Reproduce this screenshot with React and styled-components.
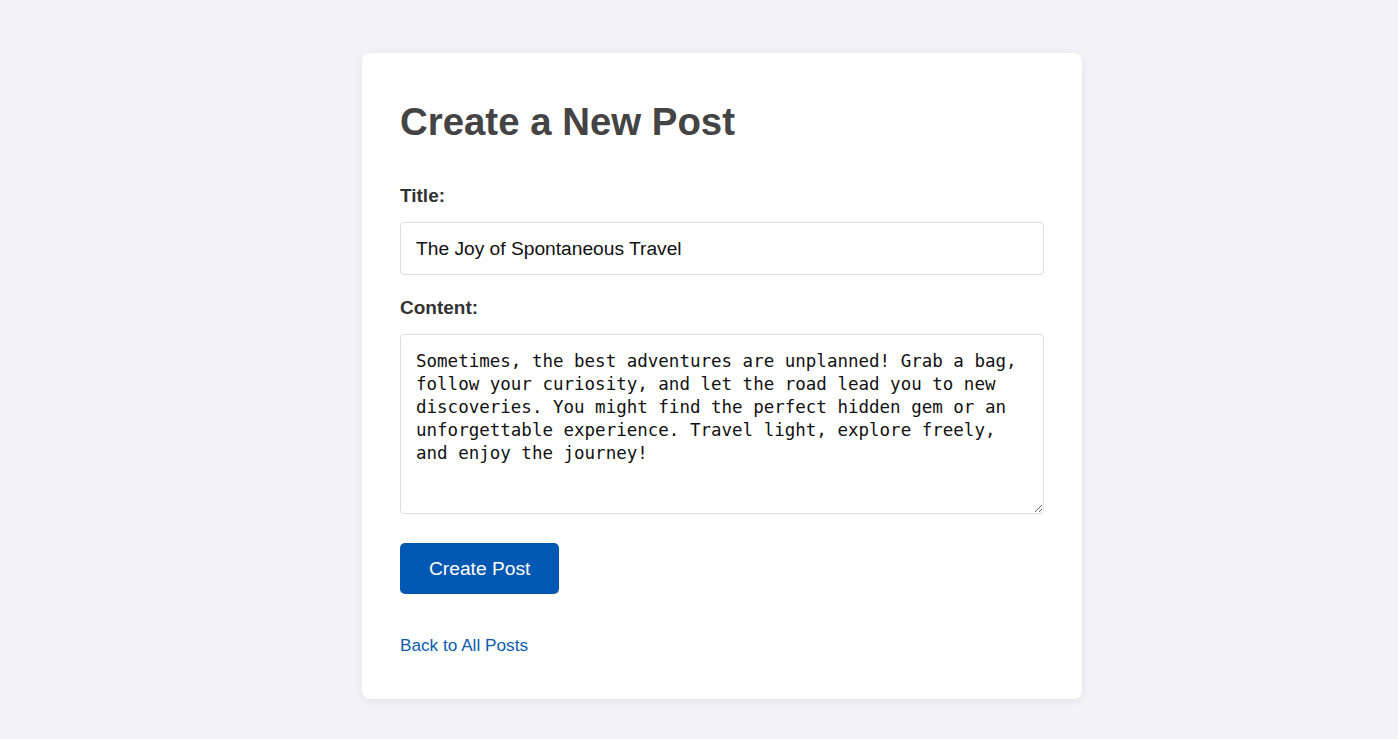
import React from "react";
import styled, { createGlobalStyle } from "styled-components";

const GlobalStyle = createGlobalStyle`
  body {
    margin: 0;
    background: #f3f3f7;
    font-family: "Liberation Sans", Arial, sans-serif;
  }
`;

const CreatePost = () => {
  return (
    <Page>
      <GlobalStyle />
      <Card>
        <Heading>Create a New Post</Heading>
        <form onSubmit={(e) => e.preventDefault()}>
          <Field>
            <Label htmlFor="title">Title:</Label>
            <TextInput
              id="title"
              type="text"
              defaultValue="The Joy of Spontaneous Travel"
            />
          </Field>
          <Field>
            <Label htmlFor="content">Content:</Label>
            <TextArea
              id="content"
              defaultValue="Sometimes, the best adventures are unplanned! Grab a bag, follow your curiosity, and let the road lead you to new discoveries. You might find the perfect hidden gem or an unforgettable experience. Travel light, explore freely, and enjoy the journey!"
            />
          </Field>
          <SubmitButton type="submit">Create Post</SubmitButton>
        </form>
        <BackLink href="#">Back to All Posts</BackLink>
      </Card>
    </Page>
  );
};

export default CreatePost;

const Page = styled.div`
  display: flex;
  justify-content: center;
  padding: 53px 0 40px 46px;
`;

const Card = styled.div`
  box-sizing: border-box;
  width: 720px;
  padding: 46px 38px 43px;
  background: #ffffff;
  border-radius: 8px;
  box-shadow: 0 2px 10px rgba(0, 0, 0, 0.07);
`;

const Heading = styled.h1`
  margin: 0 0 40px;
  font-size: 38.4px;
  line-height: 46px;
  font-weight: 700;
  color: #444444;
`;

const Field = styled.div`
  display: flex;
  flex-direction: column;
  margin-bottom: 22px;

  &:last-of-type {
    margin-bottom: 29px;
  }
`;

const Label = styled.label`
  margin-bottom: 15px;
  font-size: 19px;
  font-weight: 700;
  color: #333333;
`;

const TextInput = styled.input`
  box-sizing: border-box;
  width: 100%;
  height: 53px;
  padding: 0 15px;
  font-family: "Liberation Sans", Arial, sans-serif;
  font-size: 19.2px;
  color: #111111;
  background: #ffffff;
  border: 1px solid #dddddd;
  border-radius: 4px;
  outline: none;
`;

const TextArea = styled.textarea`
  box-sizing: border-box;
  width: 100%;
  height: 180px;
  padding: 15px 15px 12px;
  font-family: "DejaVu Sans Mono", "Liberation Mono", monospace;
  font-size: 17.5px;
  line-height: 23px;
  color: #111111;
  background: #ffffff;
  border: 1px solid #dddddd;
  border-radius: 4px;
  outline: none;
  resize: both;
`;

const SubmitButton = styled.button`
  display: block;
  height: 51px;
  padding: 0 29px;
  font-family: "Liberation Sans", Arial, sans-serif;
  font-size: 19.2px;
  color: #ffffff;
  background: #0058b3;
  border: none;
  border-radius: 5px;
  cursor: pointer;
`;

const BackLink = styled.a`
  display: inline-block;
  margin-top: 41px;
  font-size: 17.2px;
  color: #0b5cad;
  text-decoration: none;
`;
